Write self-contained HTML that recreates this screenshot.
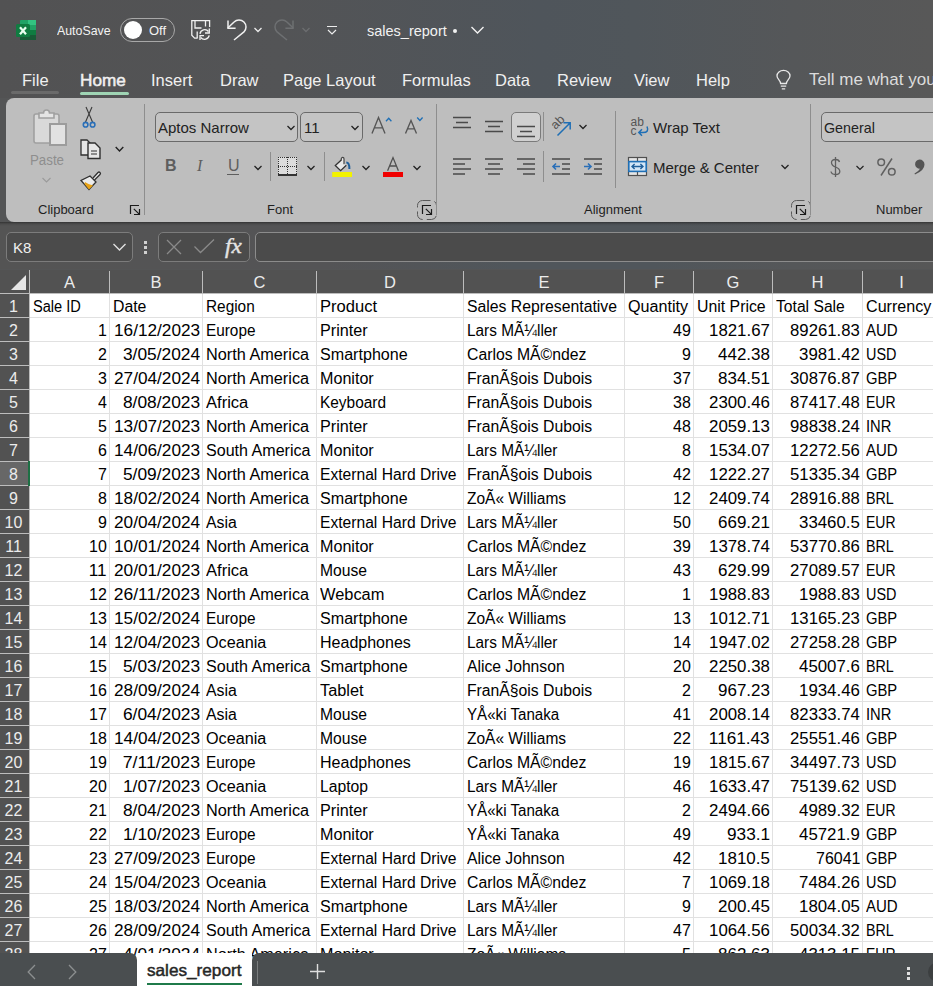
<!DOCTYPE html>
<html><head><meta charset="utf-8">
<style>
*{margin:0;padding:0;box-sizing:border-box}
html,body{width:933px;height:986px;overflow:hidden;background:#545556;font-family:"Liberation Sans",sans-serif}
.a{position:absolute}
svg{overflow:visible}
.t{position:absolute;white-space:nowrap;line-height:1}
.ch{height:23px;line-height:25px;text-align:center;color:#ececec;font-size:16.5px}
.rh{height:23px;line-height:25.5px;text-align:center;color:#ececec;font-size:16px}
.ct,.cn{height:23px;line-height:25px;color:#000;font-size:16px;white-space:nowrap;transform-origin:0 50%}
.cn{transform-origin:100% 50%}
.menu{font-size:16.5px;color:#f0f0f0;top:68px;height:24px;line-height:24px}
.rl{font-size:13px;color:#1e1e1e}

</style></head><body>
<div class="a" style="left:0;top:0;width:933px;height:98px;background:linear-gradient(90deg,#525253 0%,#535456 30%,#4f555b 58%,#50565b 68%,#555759 85%,#585858 100%)"></div>
<!-- excel icon -->
<svg class="a" style="left:16px;top:20px" width="21" height="20" viewBox="0 0 21 20">
<rect x="4" y="0" width="16" height="20" rx="1" fill="#21a366"/>
<rect x="12" y="0" width="8" height="5" fill="#33c481"/>
<rect x="12" y="10" width="8" height="5" fill="#107c41"/>
<rect x="4" y="15" width="16" height="5" fill="#185c37"/>
<rect x="0" y="4" width="14" height="13" rx="1.5" fill="#107c41"/>
<path d="M4 7.2 L10 14.3 M10 7.2 L4 14.3" stroke="#eafff0" stroke-width="2.2"/>
</svg>
<div class="t" style="left:57px;top:24px;font-size:13px;color:#f2f2f2;transform:scaleX(0.95);transform-origin:0 0">AutoSave</div>
<div class="a" style="left:120px;top:18px;width:55px;height:24px;border:1px solid #a8a8a8;border-radius:12px"></div>
<div class="a" style="left:124px;top:21px;width:18px;height:18px;border-radius:50%;background:#fff"></div>
<div class="t" style="left:149px;top:24px;font-size:13px;color:#f2f2f2">Off</div>
<!-- save icon -->
<svg class="a" style="left:188px;top:17px" width="26" height="26" viewBox="0 0 26 26" fill="none" stroke="#f0f0f0" stroke-width="1.3">
<path d="M9.5 21.2 H6.6 L3.8 18.3 V3.6 H21.6 V10"/>
<path d="M7 3.6 V11 H13.5 M17.5 3.6 V9.5"/>
<path d="M9.2 14.5 V21.2"/>
<path d="M12 16.8 A4.8 4.8 0 0 1 20.5 14.5"/>
<path d="M21.3 11.5 V16 H17"/>
<path d="M21.2 18.3 A4.8 4.8 0 0 1 12.7 20.5"/>
<path d="M12 23 V18.6 H16"/>
</svg>
<!-- undo -->
<svg class="a" style="left:226px;top:19px" width="22" height="23" viewBox="0 0 22 23" fill="none" stroke="#f0f0f0" stroke-width="1.5">
<path d="M2 1.6 V9.3 H9.6"/>
<path d="M1.8 9 L8.05 3.05 A7 7 0 0 1 17.95 12.95 L8 21"/>
</svg>
<svg class="a" style="left:254px;top:27px" width="8" height="6" viewBox="0 0 8 6" fill="none" stroke="#ececec" stroke-width="1.3"><path d="M0.5 1 L4 4.5 L7.5 1"/></svg>
<!-- redo dim -->
<svg class="a" style="left:273px;top:19px" width="22" height="23" viewBox="0 0 22 23" fill="none" stroke="#6e7072" stroke-width="1.5">
<path d="M20 1.6 V9.3 H12.4"/>
<path d="M20.2 9 L13.95 3.05 A7 7 0 0 0 4.05 12.95 L14 21"/>
</svg>
<svg class="a" style="left:302px;top:27px" width="8" height="6" viewBox="0 0 8 6" fill="none" stroke="#6c6e70" stroke-width="1.3"><path d="M0.5 1 L4 4.5 L7.5 1"/></svg>
<!-- customize -->
<svg class="a" style="left:326px;top:25px" width="12" height="12" viewBox="0 0 12 12" fill="none" stroke="#ececec" stroke-width="1.2"><path d="M1 1.5 H11 M2 5 L6 9 L10 5"/></svg>
<div class="t" style="left:367px;top:24px;font-size:14.5px;color:#f2f2f2">sales_report</div>
<div class="a" style="left:453px;top:29px;width:4px;height:4px;border-radius:50%;background:#f2f2f2"></div>
<svg class="a" style="left:471px;top:26px" width="13" height="8" viewBox="0 0 13 8" fill="none" stroke="#f2f2f2" stroke-width="1.4"><path d="M0.5 1 L6.5 7 L12.5 1"/></svg>
<!-- menu -->
<div class="t menu" style="left:22px">File</div>
<div class="a" style="left:11px;top:91px;width:48px;height:3px;border-radius:2px;background:#6a6a6a"></div>
<div class="t menu" style="left:80px;-webkit-text-stroke:0.5px #f0f0f0;transform:scaleX(1.04);transform-origin:0 0">Home</div>
<div class="a" style="left:80px;top:92px;width:49px;height:3px;border-radius:2px;background:#9fd4b4"></div>
<div class="t menu" style="left:151px">Insert</div>
<div class="t menu" style="left:220px">Draw</div>
<div class="t menu" style="left:283px">Page Layout</div>
<div class="t menu" style="left:402px">Formulas</div>
<div class="t menu" style="left:495px">Data</div>
<div class="t menu" style="left:557px">Review</div>
<div class="t menu" style="left:634px">View</div>
<div class="t menu" style="left:696px">Help</div>
<svg class="a" style="left:776px;top:70px" width="15" height="20" viewBox="0 0 15 20" fill="none" stroke="#e8e8e8" stroke-width="1.3">
<path d="M4.6 13.5 C4.6 10.2 1 9 1 6 A6.5 5.6 0 0 1 14 6 C14 9 10.4 10.2 10.4 13.5 Z"/>
<path d="M4.8 16.2 H10.2 M5.8 18.8 H9.2"/>
</svg>
<div class="t menu" style="left:809px;top:68px;font-size:17px;color:#dcdcdc">Tell me what you</div>

<div class="a" style="left:6px;top:98px;width:940px;height:124px;background:#bebebe;border-radius:8px"></div>
<!-- Clipboard group -->
<svg class="a" style="left:30px;top:106px" width="40" height="42" viewBox="0 0 40 42">
<rect x="4" y="8" width="25" height="29" rx="2" fill="#d9d9d9" stroke="#a0a0a0" stroke-width="1.6"/>
<path d="M9 12 V7 H13.5 A3 3 0 0 1 19.5 7 H24 V12 Z" fill="#e4e4e4" stroke="#a0a0a0" stroke-width="1.6"/>
<rect x="20" y="18" width="16" height="21" fill="#e2e2e2" stroke="#9c9c9c" stroke-width="2"/>
</svg>
<div class="t" style="left:30px;top:153px;font-size:14px;color:#8e8e8e;transform:scaleX(0.95);transform-origin:0 0">Paste</div>
<svg class="a" style="left:42px;top:177px" width="9" height="6" viewBox="0 0 9 6" fill="none" stroke="#9a9a9a" stroke-width="1.1"><path d="M0.5 1 L4.5 5 L8.5 1"/></svg>
<svg class="a" style="left:82px;top:106px" width="14" height="22" viewBox="0 0 14 22" fill="none">
<path d="M4 1 L10.5 16 M10 1 L3.5 16" stroke="#3a3a3a" stroke-width="1.1"/>
<circle cx="3.6" cy="18.7" r="2.3" stroke="#2a6fb8" stroke-width="1.6" fill="#c0c0c0"/>
<circle cx="10.6" cy="18.7" r="2.3" stroke="#2a6fb8" stroke-width="1.6" fill="#c0c0c0"/>
</svg>
<svg class="a" style="left:79px;top:138px" width="23" height="22" viewBox="0 0 23 22">
<path d="M2 2 H8 L11 5 V17 H2 Z" fill="#e6e6e6" stroke="#303030" stroke-width="1.3"/>
<path d="M9 5 H16 L21 10 V20.5 H9 Z" fill="#e6e6e6" stroke="#303030" stroke-width="1.4"/>
<path d="M12 13 H18 M12 16 H18" stroke="#303030" stroke-width="1.2"/>
</svg>
<svg class="a" style="left:115px;top:146px" width="9" height="7" viewBox="0 0 9 7" fill="none" stroke="#222" stroke-width="1.4"><path d="M0.7 1 L4.5 5 L8.3 1"/></svg>
<svg class="a" style="left:79px;top:170px" width="23" height="21" viewBox="0 0 23 21">
<path d="M14 8 L19 2.5 A1.3 1.3 0 0 1 21 4.5 L15.5 10" fill="#e8e8e8" stroke="#303030" stroke-width="1.3"/>
<path d="M11 6 L17 12 L10 19.5 L2 10.5 Z" fill="#ececec" stroke="#303030" stroke-width="1.3"/>
<path d="M5.5 14 L10 19.5 L14 15.5 Q9 14 6 12 Z" fill="#e8a317"/>
</svg>
<div class="t rl" style="left:38px;top:203px">Clipboard</div>
<svg class="a" style="left:129px;top:204px" width="12" height="12" viewBox="0 0 12 12" fill="none" stroke="#1a1a1a" stroke-width="1.2"><path d="M1.5 1.5 H10 M1.5 0.9 V10 M4.8 4.8 L10.2 10.2 M10.5 5 V10.5 H5"/></svg>
<div class="a" style="left:144px;top:104px;width:1px;height:111px;background:#8e8e8e"></div>
<!-- Font group -->
<div class="a" style="left:155px;top:112px;width:143px;height:30px;border:1px solid #6a6a6a;border-radius:5px;background:#c4c4c4"></div>
<div class="t" style="left:158px;top:120px;font-size:15px;color:#222">Aptos Narrow</div>
<svg class="a" style="left:287px;top:125px" width="8" height="6" viewBox="0 0 8 6" fill="none" stroke="#222" stroke-width="1.3"><path d="M0.5 1 L4 4.5 L7.5 1"/></svg>
<div class="a" style="left:300px;top:112px;width:63px;height:30px;border:1px solid #6a6a6a;border-radius:5px;background:#c4c4c4"></div>
<div class="t" style="left:304px;top:120px;font-size:15px;color:#222">11</div>
<svg class="a" style="left:351px;top:125px" width="8" height="6" viewBox="0 0 8 6" fill="none" stroke="#222" stroke-width="1.3"><path d="M0.5 1 L4 4.5 L7.5 1"/></svg>
<svg class="a" style="left:370px;top:116px" width="24" height="19" viewBox="0 0 24 19" fill="none" stroke="#555" stroke-width="1.35">
<path d="M2 17.6 L8.5 1.5 L15 17.6 M4.6 11.8 H12.4"/>
<path d="M16 5.2 L18.7 2.2 L21.4 5.2" stroke="#1f6fb5" stroke-width="1.3"/>
</svg>
<svg class="a" style="left:404px;top:116px" width="20" height="19" viewBox="0 0 20 19" fill="none" stroke="#555" stroke-width="1.35">
<path d="M1.5 17.6 L7 4.5 L12.5 17.6 M3.7 12.8 H10.3"/>
<path d="M13.2 1.5 L15.9 4.5 L18.6 1.5" stroke="#1f6fb5" stroke-width="1.3"/>
</svg>
<div class="t" style="left:165px;top:158px;font-size:16px;font-weight:bold;color:#5e5e5e">B</div>
<div class="t" style="left:197px;top:158px;font-size:16px;font-style:italic;color:#5e5e5e;font-family:'Liberation Serif'">I</div>
<div class="t" style="left:228px;top:158px;font-size:16px;color:#5e5e5e">U</div>
<div class="a" style="left:227px;top:174px;width:12px;height:1px;background:#5e5e5e"></div>
<svg class="a" style="left:254px;top:165px" width="8" height="6" viewBox="0 0 8 6" fill="none" stroke="#222" stroke-width="1.3"><path d="M0.5 1 L4 4.5 L7.5 1"/></svg>
<div class="a" style="left:270px;top:152px;width:1px;height:29px;background:#8e8e8e"></div>
<svg class="a" style="left:278px;top:157px" width="19" height="20" viewBox="0 0 19 20">
<rect x="0" y="0" width="19" height="18" fill="#dcdcdc"/>
<g fill="#333"><rect x="0" y="0" width="1" height="1"/><rect x="0" y="2" width="1" height="1"/><rect x="0" y="4" width="1" height="1"/><rect x="0" y="6" width="1" height="1"/><rect x="0" y="8" width="1" height="1"/><rect x="0" y="9" width="1" height="1"/><rect x="0" y="10" width="1" height="1"/><rect x="0" y="12" width="1" height="1"/><rect x="0" y="14" width="1" height="1"/><rect x="0" y="16" width="1" height="1"/><rect x="2" y="0" width="1" height="1"/><rect x="2" y="9" width="1" height="1"/><rect x="4" y="0" width="1" height="1"/><rect x="4" y="9" width="1" height="1"/><rect x="6" y="0" width="1" height="1"/><rect x="6" y="9" width="1" height="1"/><rect x="8" y="0" width="1" height="1"/><rect x="8" y="9" width="1" height="1"/><rect x="9" y="0" width="1" height="1"/><rect x="9" y="2" width="1" height="1"/><rect x="9" y="4" width="1" height="1"/><rect x="9" y="6" width="1" height="1"/><rect x="9" y="8" width="1" height="1"/><rect x="9" y="10" width="1" height="1"/><rect x="9" y="12" width="1" height="1"/><rect x="9" y="14" width="1" height="1"/><rect x="9" y="16" width="1" height="1"/><rect x="10" y="0" width="1" height="1"/><rect x="10" y="9" width="1" height="1"/><rect x="12" y="0" width="1" height="1"/><rect x="12" y="9" width="1" height="1"/><rect x="14" y="0" width="1" height="1"/><rect x="14" y="9" width="1" height="1"/><rect x="16" y="0" width="1" height="1"/><rect x="16" y="9" width="1" height="1"/><rect x="18" y="0" width="1" height="1"/><rect x="18" y="2" width="1" height="1"/><rect x="18" y="4" width="1" height="1"/><rect x="18" y="6" width="1" height="1"/><rect x="18" y="8" width="1" height="1"/><rect x="18" y="9" width="1" height="1"/><rect x="18" y="10" width="1" height="1"/><rect x="18" y="12" width="1" height="1"/><rect x="18" y="14" width="1" height="1"/><rect x="18" y="16" width="1" height="1"/></g>
<rect x="0" y="17" width="19" height="2" fill="#333"/>
</svg>
<svg class="a" style="left:307px;top:165px" width="8" height="6" viewBox="0 0 8 6" fill="none" stroke="#222" stroke-width="1.3"><path d="M0.5 1 L4 4.5 L7.5 1"/></svg>
<div class="a" style="left:324px;top:152px;width:1px;height:29px;background:#8e8e8e"></div>
<svg class="a" style="left:328px;top:152px" width="28" height="28" viewBox="0 0 28 28" fill="none">
<path d="M13.3 8 L7.3 13.5 L12.6 18.6 L18.3 13.2 L16 11 V6.8 A1.5 1.5 0 0 0 13.3 6.8 Z" fill="#e8e8e8"/>
<path d="M13.3 8 L7.3 13.5 L12.6 18.6 L18.3 13.2" stroke="#333" stroke-width="1.3"/>
<path d="M13.3 8.5 V6.8 A1.35 1.35 0 0 1 16 6.8 V12.3" stroke="#444" stroke-width="1.2"/>
<path d="M18.3 10.6 Q21.4 10.6 21.4 17" stroke="#1f5f9a" stroke-width="2"/>
<rect x="4.2" y="20" width="19.8" height="5" fill="#f2f200"/>
</svg>
<svg class="a" style="left:362px;top:165px" width="8" height="6" viewBox="0 0 8 6" fill="none" stroke="#222" stroke-width="1.3"><path d="M0.5 1 L4 4.5 L7.5 1"/></svg>
<svg class="a" style="left:387px;top:157px" width="12" height="14" viewBox="0 0 12 14" fill="none" stroke="#505050" stroke-width="1.3"><path d="M0.6 13.8 L6 0.6 L11.4 13.8 M2.6 9 H9.4"/></svg>
<div class="a" style="left:383px;top:172px;width:20px;height:5px;background:#f00000"></div>
<svg class="a" style="left:413px;top:165px" width="8" height="6" viewBox="0 0 8 6" fill="none" stroke="#222" stroke-width="1.3"><path d="M0.5 1 L4 4.5 L7.5 1"/></svg>
<div class="t rl" style="left:267px;top:203px">Font</div>
<svg class="a" style="left:417px;top:200px" width="20" height="20" viewBox="0 0 20 20" fill="none"><rect x="0.5" y="0.5" width="19" height="19" rx="5" stroke="#5a5a5a" stroke-width="1" stroke-dasharray="11 4" stroke-dashoffset="3"/></svg>
<svg class="a" style="left:421px;top:204px" width="12" height="12" viewBox="0 0 12 12" fill="none" stroke="#1a1a1a" stroke-width="1.2"><path d="M1.5 1.5 H10 M1.5 0.9 V10 M4.8 4.8 L10.2 10.2 M10.5 5 V10.5 H5"/></svg>
<div class="a" style="left:436px;top:104px;width:1px;height:111px;background:#8e8e8e"></div>
<!-- Alignment group -->
<svg class="a" style="left:452px;top:116px" width="20" height="13" viewBox="0 0 20 13" stroke="#4a4a4a" stroke-width="1.4"><path d="M1 1.5 H19 M4 6.5 H16 M1 11.5 H19"/></svg>
<svg class="a" style="left:484px;top:120px" width="20" height="13" viewBox="0 0 20 13" stroke="#4a4a4a" stroke-width="1.4"><path d="M1 1.5 H19 M4 6.5 H16 M1 11.5 H19"/></svg>
<div class="a" style="left:511px;top:112px;width:30px;height:30px;border:1px solid #7a7a7a;border-radius:5px;background:#d0d0d0"></div>
<svg class="a" style="left:516px;top:125px" width="20" height="13" viewBox="0 0 20 13" stroke="#4a4a4a" stroke-width="1.4"><path d="M1 1.5 H19 M4 6.5 H16 M1 11.5 H19"/></svg>
<div class="a" style="left:543px;top:112px;width:1px;height:29px;background:#8e8e8e"></div>
<svg class="a" style="left:550px;top:114px" width="24" height="23" viewBox="0 0 24 23" fill="none">
<text x="0" y="0" font-family="Liberation Sans" font-size="12.5" fill="#555" transform="translate(5.5 16) rotate(-45)">ab</text>
<path d="M7.5 21.5 L19.5 9.5 M13.5 8.8 H20.2 V15.5" stroke="#1f6fb5" stroke-width="1.5"/>
</svg>
<svg class="a" style="left:579px;top:124px" width="8" height="6" viewBox="0 0 8 6" fill="none" stroke="#222" stroke-width="1.3"><path d="M0.5 1 L4 4.5 L7.5 1"/></svg>
<svg class="a" style="left:452px;top:158px" width="20" height="18" viewBox="0 0 20 18" stroke="#4a4a4a" stroke-width="1.4"><path d="M1 1 H19 M1 6 H13 M1 11 H19 M1 16 H13"/></svg>
<svg class="a" style="left:484px;top:158px" width="20" height="18" viewBox="0 0 20 18" stroke="#4a4a4a" stroke-width="1.4"><path d="M1 1 H19 M4 6 H16 M1 11 H19 M4 16 H16"/></svg>
<svg class="a" style="left:516px;top:158px" width="20" height="18" viewBox="0 0 20 18" stroke="#4a4a4a" stroke-width="1.4"><path d="M1 1 H19 M7 6 H19 M1 11 H19 M7 16 H19"/></svg>
<div class="a" style="left:543px;top:151px;width:1px;height:31px;background:#8e8e8e"></div>
<svg class="a" style="left:551px;top:158px" width="20" height="18" viewBox="0 0 20 18" fill="none"><path d="M1 1 H19 M11 6 H19 M11 11 H19 M1 16 H19" stroke="#4a4a4a" stroke-width="1.6"/><path d="M9 8.5 H2 M5 5.5 L2 8.5 L5 11.5" stroke="#2a6fb8" stroke-width="1.6"/></svg>
<svg class="a" style="left:583px;top:158px" width="20" height="18" viewBox="0 0 20 18" fill="none"><path d="M1 1 H19 M11 6 H19 M11 11 H19 M1 16 H19" stroke="#4a4a4a" stroke-width="1.6"/><path d="M1 8.5 H8 M5 5.5 L8 8.5 L5 11.5" stroke="#2a6fb8" stroke-width="1.6"/></svg>
<div class="a" style="left:615px;top:111px;width:1px;height:77px;background:#8e8e8e"></div>
<svg class="a" style="left:630px;top:116px" width="20" height="22" viewBox="0 0 20 22" fill="none">
<text x="0.5" y="10" font-family="Liberation Sans" font-size="12" fill="#555">ab</text>
<text x="0.5" y="19" font-family="Liberation Sans" font-size="12" fill="#555">c</text>
<path d="M17 10.5 Q19.5 16.5 13 16.5 H9 M12 13.3 L8.8 16.5 L12 19.7" stroke="#1f6fb5" stroke-width="1.5"/>
</svg>
<div class="t" style="left:653px;top:120px;font-size:15px;color:#222">Wrap Text</div>
<svg class="a" style="left:628px;top:157px" width="19" height="19" viewBox="0 0 19 19" fill="none">
<rect x="0.5" y="0.5" width="18" height="18" fill="#e6e6e6" stroke="#505050" stroke-width="1.2"/>
<path d="M9.5 0.5 V4.5 M9.5 14.5 V18.5" stroke="#505050" stroke-width="1.2"/>
<rect x="0.8" y="4.6" width="17.4" height="9.8" fill="#d3e6f7" stroke="#1f6fb5" stroke-width="1.6"/>
<path d="M4 9.5 H15 M6.6 6.9 L4 9.5 L6.6 12.1 M12.4 6.9 L15 9.5 L12.4 12.1" stroke="#1f5f9a" stroke-width="1.4"/>
</svg>
<div class="t" style="left:653px;top:160px;font-size:15px;color:#222">Merge &amp; Center</div>
<svg class="a" style="left:781px;top:164px" width="8" height="6" viewBox="0 0 8 6" fill="none" stroke="#222" stroke-width="1.3"><path d="M0.5 1 L4 4.5 L7.5 1"/></svg>
<div class="t rl" style="left:584px;top:203px">Alignment</div>
<svg class="a" style="left:791px;top:200px" width="20" height="20" viewBox="0 0 20 20" fill="none"><rect x="0.5" y="0.5" width="19" height="19" rx="5" stroke="#5a5a5a" stroke-width="1" stroke-dasharray="11 4" stroke-dashoffset="3"/></svg>
<svg class="a" style="left:795px;top:204px" width="12" height="12" viewBox="0 0 12 12" fill="none" stroke="#1a1a1a" stroke-width="1.2"><path d="M1.5 1.5 H10 M1.5 0.9 V10 M4.8 4.8 L10.2 10.2 M10.5 5 V10.5 H5"/></svg>
<div class="a" style="left:810px;top:104px;width:1px;height:111px;background:#8e8e8e"></div>
<!-- Number group -->
<div class="a" style="left:821px;top:112px;width:140px;height:30px;border:1px solid #6a6a6a;border-radius:5px;background:#c4c4c4"></div>
<div class="t" style="left:824px;top:121px;font-size:14.3px;color:#222">General</div>
<svg class="a" style="left:830px;top:157px" width="11" height="21" viewBox="0 0 11 21" fill="none" stroke="#606060" stroke-width="1.3">
<path d="M9.5 5 Q9 2.5 5.5 2.5 Q1.5 2.5 1.5 5.5 Q1.5 8.5 5.5 10 Q9.8 11.5 9.8 14.5 Q9.8 17.5 5.5 17.5 Q1.5 17.5 1 14.5"/>
<path d="M5.5 0 V20"/>
</svg>
<svg class="a" style="left:856px;top:165px" width="8" height="6" viewBox="0 0 8 6" fill="none" stroke="#222" stroke-width="1.2"><path d="M0.5 1 L4 4.5 L7.5 1"/></svg>
<svg class="a" style="left:877px;top:158px" width="19" height="18" viewBox="0 0 19 18" fill="none" stroke="#606060" stroke-width="1.5">
<circle cx="4.2" cy="4.2" r="3.3"/><circle cx="14.8" cy="13.8" r="3.3"/><path d="M15 0.5 L4 17.5"/>
</svg>
<svg class="a" style="left:914px;top:159px" width="11" height="16" viewBox="0 0 11 16">
<path d="M5.5 0.5 A5 5 0 0 1 10.5 5.5 Q10.5 11.5 1 15.5 L0.5 14.5 Q5 12 6 9.8 A4.6 4.6 0 1 1 5.5 0.5 Z" fill="#545454"/>
</svg>
<div class="t rl" style="left:876px;top:203px">Number</div>

<div class="a" style="left:0;top:222px;width:933px;height:47px;background:linear-gradient(180deg,rgba(30,30,30,0.6) 0px,rgba(30,30,30,0.15) 2px,rgba(0,0,0,0) 4px),linear-gradient(90deg,#545454 0%,#545456 35%,#50565b 55%,#50565b 70%,#555759 85%,#575757 100%)"></div>
<div class="a" style="left:6px;top:232px;width:127px;height:30px;border:1px solid #7c7c7c;border-radius:5px;background:#4b4b4b"></div>
<div class="t" style="left:13px;top:240px;font-size:15px;color:#f0f0f0">K8</div>
<svg class="a" style="left:113px;top:243px" width="13" height="8" viewBox="0 0 13 8" fill="none" stroke="#e0e0e0" stroke-width="1.4"><path d="M0.5 1 L6.5 7 L12.5 1"/></svg>
<div class="a" style="left:144px;top:241px;width:3px;height:3px;background:#d0d0d0;"></div>
<div class="a" style="left:144px;top:246px;width:3px;height:3px;background:#d0d0d0;"></div>
<div class="a" style="left:144px;top:251px;width:3px;height:3px;background:#d0d0d0;"></div>
<div class="a" style="left:158px;top:232px;width:92px;height:30px;border:1px solid #7c7c7c;border-radius:5px;background:#4b4b4b"></div>
<svg class="a" style="left:166px;top:239px" width="16" height="16" viewBox="0 0 16 16" stroke="#8a8a8a" stroke-width="1.3"><path d="M1 1 L15 15 M15 1 L1 15"/></svg>
<svg class="a" style="left:194px;top:239px" width="21" height="16" viewBox="0 0 21 16" fill="none" stroke="#8a8a8a" stroke-width="1.3"><path d="M0.5 7.5 L6.5 13.5 L20 0.5"/></svg>
<div class="t" style="left:225px;top:236px;font-size:21px;font-family:'Liberation Serif';font-style:italic;color:#e4e4e4;-webkit-text-stroke:0.4px #e4e4e4;transform:scaleX(1.1);transform-origin:0 0">fx</div>
<div class="a" style="left:255px;top:232px;width:700px;height:30px;border:1px solid #8c8c8c;border-radius:5px;background:#4b4b4b"></div>

<div class="a" style="left:0;top:270px;width:933px;height:23px;background:#525252"></div>
<svg class="a" style="left:0;top:270px" width="29" height="24"><path d="M26 5 L26 20 L11 20 Z" fill="#e6e6e6"/></svg>
<div class="a ch" style="left:30px;top:270px;width:79px">A</div>
<div class="a" style="left:29px;top:271px;width:1px;height:22px;background:#bcbcbc"></div>
<div class="a ch" style="left:110px;top:270px;width:92px">B</div>
<div class="a" style="left:109px;top:271px;width:1px;height:22px;background:#bcbcbc"></div>
<div class="a ch" style="left:203px;top:270px;width:113px">C</div>
<div class="a" style="left:202px;top:271px;width:1px;height:22px;background:#bcbcbc"></div>
<div class="a ch" style="left:317px;top:270px;width:146px">D</div>
<div class="a" style="left:316px;top:271px;width:1px;height:22px;background:#bcbcbc"></div>
<div class="a ch" style="left:464px;top:270px;width:160px">E</div>
<div class="a" style="left:463px;top:271px;width:1px;height:22px;background:#bcbcbc"></div>
<div class="a ch" style="left:625px;top:270px;width:68px">F</div>
<div class="a" style="left:624px;top:271px;width:1px;height:22px;background:#bcbcbc"></div>
<div class="a ch" style="left:694px;top:270px;width:78px">G</div>
<div class="a" style="left:693px;top:271px;width:1px;height:22px;background:#bcbcbc"></div>
<div class="a ch" style="left:773px;top:270px;width:89px">H</div>
<div class="a" style="left:772px;top:271px;width:1px;height:22px;background:#bcbcbc"></div>
<div class="a ch" style="left:863px;top:270px;width:77px">I</div>
<div class="a" style="left:862px;top:271px;width:1px;height:22px;background:#bcbcbc"></div>
<div class="a" style="left:0;top:293px;width:933px;height:1px;background:#bdbdbd"></div>
<div class="a" style="left:30px;top:294px;width:903px;height:700px;background:#fff"></div>
<div class="a" style="left:0;top:294px;width:29px;height:700px;background:#525252"></div>
<div class="a" style="left:29px;top:270px;width:1px;height:720px;background:#bdbdbd"></div>
<div class="a" style="left:0;top:317px;width:29px;height:1px;background:#bdbdbd"></div>
<div class="a" style="left:30px;top:317px;width:903px;height:1px;background:#e1e1e1"></div>
<div class="a rh" style="left:0;top:294px;width:27px">1</div>
<div class="a" style="left:0;top:341px;width:29px;height:1px;background:#bdbdbd"></div>
<div class="a" style="left:30px;top:341px;width:903px;height:1px;background:#e1e1e1"></div>
<div class="a rh" style="left:0;top:318px;width:27px">2</div>
<div class="a" style="left:0;top:365px;width:29px;height:1px;background:#bdbdbd"></div>
<div class="a" style="left:30px;top:365px;width:903px;height:1px;background:#e1e1e1"></div>
<div class="a rh" style="left:0;top:342px;width:27px">3</div>
<div class="a" style="left:0;top:389px;width:29px;height:1px;background:#bdbdbd"></div>
<div class="a" style="left:30px;top:389px;width:903px;height:1px;background:#e1e1e1"></div>
<div class="a rh" style="left:0;top:366px;width:27px">4</div>
<div class="a" style="left:0;top:413px;width:29px;height:1px;background:#bdbdbd"></div>
<div class="a" style="left:30px;top:413px;width:903px;height:1px;background:#e1e1e1"></div>
<div class="a rh" style="left:0;top:390px;width:27px">5</div>
<div class="a" style="left:0;top:437px;width:29px;height:1px;background:#bdbdbd"></div>
<div class="a" style="left:30px;top:437px;width:903px;height:1px;background:#e1e1e1"></div>
<div class="a rh" style="left:0;top:414px;width:27px">6</div>
<div class="a" style="left:0;top:461px;width:29px;height:1px;background:#bdbdbd"></div>
<div class="a" style="left:30px;top:461px;width:903px;height:1px;background:#e1e1e1"></div>
<div class="a rh" style="left:0;top:438px;width:27px">7</div>
<div class="a" style="left:0;top:485px;width:29px;height:1px;background:#bdbdbd"></div>
<div class="a" style="left:30px;top:485px;width:903px;height:1px;background:#e1e1e1"></div>
<div class="a" style="left:0;top:462px;width:29px;height:23px;background:#676767"></div>
<div class="a" style="left:28px;top:461px;width:2px;height:25px;background:#1d7044"></div>
<div class="a rh" style="left:0;top:462px;width:27px">8</div>
<div class="a" style="left:0;top:509px;width:29px;height:1px;background:#bdbdbd"></div>
<div class="a" style="left:30px;top:509px;width:903px;height:1px;background:#e1e1e1"></div>
<div class="a rh" style="left:0;top:486px;width:27px">9</div>
<div class="a" style="left:0;top:533px;width:29px;height:1px;background:#bdbdbd"></div>
<div class="a" style="left:30px;top:533px;width:903px;height:1px;background:#e1e1e1"></div>
<div class="a rh" style="left:0;top:510px;width:27px">10</div>
<div class="a" style="left:0;top:557px;width:29px;height:1px;background:#bdbdbd"></div>
<div class="a" style="left:30px;top:557px;width:903px;height:1px;background:#e1e1e1"></div>
<div class="a rh" style="left:0;top:534px;width:27px">11</div>
<div class="a" style="left:0;top:581px;width:29px;height:1px;background:#bdbdbd"></div>
<div class="a" style="left:30px;top:581px;width:903px;height:1px;background:#e1e1e1"></div>
<div class="a rh" style="left:0;top:558px;width:27px">12</div>
<div class="a" style="left:0;top:605px;width:29px;height:1px;background:#bdbdbd"></div>
<div class="a" style="left:30px;top:605px;width:903px;height:1px;background:#e1e1e1"></div>
<div class="a rh" style="left:0;top:582px;width:27px">13</div>
<div class="a" style="left:0;top:629px;width:29px;height:1px;background:#bdbdbd"></div>
<div class="a" style="left:30px;top:629px;width:903px;height:1px;background:#e1e1e1"></div>
<div class="a rh" style="left:0;top:606px;width:27px">14</div>
<div class="a" style="left:0;top:653px;width:29px;height:1px;background:#bdbdbd"></div>
<div class="a" style="left:30px;top:653px;width:903px;height:1px;background:#e1e1e1"></div>
<div class="a rh" style="left:0;top:630px;width:27px">15</div>
<div class="a" style="left:0;top:677px;width:29px;height:1px;background:#bdbdbd"></div>
<div class="a" style="left:30px;top:677px;width:903px;height:1px;background:#e1e1e1"></div>
<div class="a rh" style="left:0;top:654px;width:27px">16</div>
<div class="a" style="left:0;top:701px;width:29px;height:1px;background:#bdbdbd"></div>
<div class="a" style="left:30px;top:701px;width:903px;height:1px;background:#e1e1e1"></div>
<div class="a rh" style="left:0;top:678px;width:27px">17</div>
<div class="a" style="left:0;top:725px;width:29px;height:1px;background:#bdbdbd"></div>
<div class="a" style="left:30px;top:725px;width:903px;height:1px;background:#e1e1e1"></div>
<div class="a rh" style="left:0;top:702px;width:27px">18</div>
<div class="a" style="left:0;top:749px;width:29px;height:1px;background:#bdbdbd"></div>
<div class="a" style="left:30px;top:749px;width:903px;height:1px;background:#e1e1e1"></div>
<div class="a rh" style="left:0;top:726px;width:27px">19</div>
<div class="a" style="left:0;top:773px;width:29px;height:1px;background:#bdbdbd"></div>
<div class="a" style="left:30px;top:773px;width:903px;height:1px;background:#e1e1e1"></div>
<div class="a rh" style="left:0;top:750px;width:27px">20</div>
<div class="a" style="left:0;top:797px;width:29px;height:1px;background:#bdbdbd"></div>
<div class="a" style="left:30px;top:797px;width:903px;height:1px;background:#e1e1e1"></div>
<div class="a rh" style="left:0;top:774px;width:27px">21</div>
<div class="a" style="left:0;top:821px;width:29px;height:1px;background:#bdbdbd"></div>
<div class="a" style="left:30px;top:821px;width:903px;height:1px;background:#e1e1e1"></div>
<div class="a rh" style="left:0;top:798px;width:27px">22</div>
<div class="a" style="left:0;top:845px;width:29px;height:1px;background:#bdbdbd"></div>
<div class="a" style="left:30px;top:845px;width:903px;height:1px;background:#e1e1e1"></div>
<div class="a rh" style="left:0;top:822px;width:27px">23</div>
<div class="a" style="left:0;top:869px;width:29px;height:1px;background:#bdbdbd"></div>
<div class="a" style="left:30px;top:869px;width:903px;height:1px;background:#e1e1e1"></div>
<div class="a rh" style="left:0;top:846px;width:27px">24</div>
<div class="a" style="left:0;top:893px;width:29px;height:1px;background:#bdbdbd"></div>
<div class="a" style="left:30px;top:893px;width:903px;height:1px;background:#e1e1e1"></div>
<div class="a rh" style="left:0;top:870px;width:27px">25</div>
<div class="a" style="left:0;top:917px;width:29px;height:1px;background:#bdbdbd"></div>
<div class="a" style="left:30px;top:917px;width:903px;height:1px;background:#e1e1e1"></div>
<div class="a rh" style="left:0;top:894px;width:27px">26</div>
<div class="a" style="left:0;top:941px;width:29px;height:1px;background:#bdbdbd"></div>
<div class="a" style="left:30px;top:941px;width:903px;height:1px;background:#e1e1e1"></div>
<div class="a rh" style="left:0;top:918px;width:27px">27</div>
<div class="a" style="left:0;top:965px;width:29px;height:1px;background:#bdbdbd"></div>
<div class="a" style="left:30px;top:965px;width:903px;height:1px;background:#e1e1e1"></div>
<div class="a rh" style="left:0;top:942px;width:27px">28</div>
<div class="a" style="left:109px;top:294px;width:1px;height:700px;background:#e1e1e1"></div>
<div class="a" style="left:202px;top:294px;width:1px;height:700px;background:#e1e1e1"></div>
<div class="a" style="left:316px;top:294px;width:1px;height:700px;background:#e1e1e1"></div>
<div class="a" style="left:463px;top:294px;width:1px;height:700px;background:#e1e1e1"></div>
<div class="a" style="left:624px;top:294px;width:1px;height:700px;background:#e1e1e1"></div>
<div class="a" style="left:693px;top:294px;width:1px;height:700px;background:#e1e1e1"></div>
<div class="a" style="left:772px;top:294px;width:1px;height:700px;background:#e1e1e1"></div>
<div class="a" style="left:862px;top:294px;width:1px;height:700px;background:#e1e1e1"></div>
<div class="a ct" style="left:33px;top:294px;transform:scaleX(0.913)">Sale ID</div>
<div class="a ct" style="left:113px;top:294px;transform:scaleX(0.988)">Date</div>
<div class="a ct" style="left:206px;top:294px;transform:scaleX(0.961)">Region</div>
<div class="a ct" style="left:320px;top:294px;transform:scaleX(1.034)">Product</div>
<div class="a ct" style="left:467px;top:294px;transform:scaleX(0.986)">Sales Representative</div>
<div class="a ct" style="left:628px;top:294px;transform:scaleX(1.008)">Quantity</div>
<div class="a ct" style="left:697px;top:294px;transform:scaleX(0.990)">Unit Price</div>
<div class="a ct" style="left:776px;top:294px;transform:scaleX(0.979)">Total Sale</div>
<div class="a ct" style="left:866px;top:294px;transform:scaleX(1.008)">Currency</div>
<div class="a cn" style="right:826px;top:318px;transform:scaleX(0.998)">1</div>
<div class="a cn" style="right:733px;top:318px;transform:scaleX(1.075)">16/12/2023</div>
<div class="a ct" style="left:206px;top:318px;transform:scaleX(0.958)">Europe</div>
<div class="a ct" style="left:320px;top:318px;transform:scaleX(1.012)">Printer</div>
<div class="a ct" style="left:467px;top:318px;transform:scaleX(0.960)">Lars MÃ¼ller</div>
<div class="a cn" style="right:242px;top:318px;transform:scaleX(0.998)">49</div>
<div class="a cn" style="right:163px;top:318px;transform:scaleX(1.051)">1821.67</div>
<div class="a cn" style="right:73px;top:318px;transform:scaleX(1.044)">89261.83</div>
<div class="a ct" style="left:866px;top:318px;transform:scaleX(0.938)">AUD</div>
<div class="a cn" style="right:826px;top:342px;transform:scaleX(0.998)">2</div>
<div class="a cn" style="right:733px;top:342px;transform:scaleX(1.085)">3/05/2024</div>
<div class="a ct" style="left:206px;top:342px;transform:scaleX(1.017)">North America</div>
<div class="a ct" style="left:320px;top:342px;transform:scaleX(1.006)">Smartphone</div>
<div class="a ct" style="left:467px;top:342px;transform:scaleX(0.985)">Carlos MÃ©ndez</div>
<div class="a cn" style="right:242px;top:342px;transform:scaleX(0.998)">9</div>
<div class="a cn" style="right:163px;top:342px;transform:scaleX(1.061)">442.38</div>
<div class="a cn" style="right:73px;top:342px;transform:scaleX(1.051)">3981.42</div>
<div class="a ct" style="left:866px;top:342px;transform:scaleX(0.900)">USD</div>
<div class="a cn" style="right:826px;top:366px;transform:scaleX(0.998)">3</div>
<div class="a cn" style="right:733px;top:366px;transform:scaleX(1.075)">27/04/2024</div>
<div class="a ct" style="left:206px;top:366px;transform:scaleX(1.017)">North America</div>
<div class="a ct" style="left:320px;top:366px;transform:scaleX(1.007)">Monitor</div>
<div class="a ct" style="left:467px;top:366px;transform:scaleX(0.983)">FranÃ§ois Dubois</div>
<div class="a cn" style="right:242px;top:366px;transform:scaleX(0.998)">37</div>
<div class="a cn" style="right:163px;top:366px;transform:scaleX(1.061)">834.51</div>
<div class="a cn" style="right:73px;top:366px;transform:scaleX(1.044)">30876.87</div>
<div class="a ct" style="left:866px;top:366px;transform:scaleX(0.924)">GBP</div>
<div class="a cn" style="right:826px;top:390px;transform:scaleX(0.998)">4</div>
<div class="a cn" style="right:733px;top:390px;transform:scaleX(1.085)">8/08/2023</div>
<div class="a ct" style="left:206px;top:390px;transform:scaleX(1.034)">Africa</div>
<div class="a ct" style="left:320px;top:390px;transform:scaleX(0.964)">Keyboard</div>
<div class="a ct" style="left:467px;top:390px;transform:scaleX(0.983)">FranÃ§ois Dubois</div>
<div class="a cn" style="right:242px;top:390px;transform:scaleX(0.998)">38</div>
<div class="a cn" style="right:163px;top:390px;transform:scaleX(1.051)">2300.46</div>
<div class="a cn" style="right:73px;top:390px;transform:scaleX(1.044)">87417.48</div>
<div class="a ct" style="left:866px;top:390px;transform:scaleX(0.874)">EUR</div>
<div class="a cn" style="right:826px;top:414px;transform:scaleX(0.998)">5</div>
<div class="a cn" style="right:733px;top:414px;transform:scaleX(1.075)">13/07/2023</div>
<div class="a ct" style="left:206px;top:414px;transform:scaleX(1.017)">North America</div>
<div class="a ct" style="left:320px;top:414px;transform:scaleX(1.012)">Printer</div>
<div class="a ct" style="left:467px;top:414px;transform:scaleX(0.983)">FranÃ§ois Dubois</div>
<div class="a cn" style="right:242px;top:414px;transform:scaleX(0.998)">48</div>
<div class="a cn" style="right:163px;top:414px;transform:scaleX(1.051)">2059.13</div>
<div class="a cn" style="right:73px;top:414px;transform:scaleX(1.044)">98838.24</div>
<div class="a ct" style="left:866px;top:414px;transform:scaleX(0.921)">INR</div>
<div class="a cn" style="right:826px;top:438px;transform:scaleX(0.998)">6</div>
<div class="a cn" style="right:733px;top:438px;transform:scaleX(1.075)">14/06/2023</div>
<div class="a ct" style="left:206px;top:438px;transform:scaleX(1.004)">South America</div>
<div class="a ct" style="left:320px;top:438px;transform:scaleX(1.007)">Monitor</div>
<div class="a ct" style="left:467px;top:438px;transform:scaleX(0.960)">Lars MÃ¼ller</div>
<div class="a cn" style="right:242px;top:438px;transform:scaleX(0.998)">8</div>
<div class="a cn" style="right:163px;top:438px;transform:scaleX(1.051)">1534.07</div>
<div class="a cn" style="right:73px;top:438px;transform:scaleX(1.044)">12272.56</div>
<div class="a ct" style="left:866px;top:438px;transform:scaleX(0.938)">AUD</div>
<div class="a cn" style="right:826px;top:462px;transform:scaleX(0.998)">7</div>
<div class="a cn" style="right:733px;top:462px;transform:scaleX(1.085)">5/09/2023</div>
<div class="a ct" style="left:206px;top:462px;transform:scaleX(1.017)">North America</div>
<div class="a ct" style="left:320px;top:462px;transform:scaleX(0.977)">External Hard Drive</div>
<div class="a ct" style="left:467px;top:462px;transform:scaleX(0.983)">FranÃ§ois Dubois</div>
<div class="a cn" style="right:242px;top:462px;transform:scaleX(0.998)">42</div>
<div class="a cn" style="right:163px;top:462px;transform:scaleX(1.051)">1222.27</div>
<div class="a cn" style="right:73px;top:462px;transform:scaleX(1.044)">51335.34</div>
<div class="a ct" style="left:866px;top:462px;transform:scaleX(0.924)">GBP</div>
<div class="a cn" style="right:826px;top:486px;transform:scaleX(0.998)">8</div>
<div class="a cn" style="right:733px;top:486px;transform:scaleX(1.075)">18/02/2024</div>
<div class="a ct" style="left:206px;top:486px;transform:scaleX(1.017)">North America</div>
<div class="a ct" style="left:320px;top:486px;transform:scaleX(1.006)">Smartphone</div>
<div class="a ct" style="left:467px;top:486px;transform:scaleX(0.969)">ZoÃ« Williams</div>
<div class="a cn" style="right:242px;top:486px;transform:scaleX(0.998)">12</div>
<div class="a cn" style="right:163px;top:486px;transform:scaleX(1.051)">2409.74</div>
<div class="a cn" style="right:73px;top:486px;transform:scaleX(1.044)">28916.88</div>
<div class="a ct" style="left:866px;top:486px;transform:scaleX(0.894)">BRL</div>
<div class="a cn" style="right:826px;top:510px;transform:scaleX(0.998)">9</div>
<div class="a cn" style="right:733px;top:510px;transform:scaleX(1.075)">20/04/2024</div>
<div class="a ct" style="left:206px;top:510px;transform:scaleX(0.990)">Asia</div>
<div class="a ct" style="left:320px;top:510px;transform:scaleX(0.977)">External Hard Drive</div>
<div class="a ct" style="left:467px;top:510px;transform:scaleX(0.960)">Lars MÃ¼ller</div>
<div class="a cn" style="right:242px;top:510px;transform:scaleX(0.998)">50</div>
<div class="a cn" style="right:163px;top:510px;transform:scaleX(1.061)">669.21</div>
<div class="a cn" style="right:73px;top:510px;transform:scaleX(1.051)">33460.5</div>
<div class="a ct" style="left:866px;top:510px;transform:scaleX(0.874)">EUR</div>
<div class="a cn" style="right:826px;top:534px;transform:scaleX(0.998)">10</div>
<div class="a cn" style="right:733px;top:534px;transform:scaleX(1.075)">10/01/2024</div>
<div class="a ct" style="left:206px;top:534px;transform:scaleX(1.017)">North America</div>
<div class="a ct" style="left:320px;top:534px;transform:scaleX(1.007)">Monitor</div>
<div class="a ct" style="left:467px;top:534px;transform:scaleX(0.985)">Carlos MÃ©ndez</div>
<div class="a cn" style="right:242px;top:534px;transform:scaleX(0.998)">39</div>
<div class="a cn" style="right:163px;top:534px;transform:scaleX(1.051)">1378.74</div>
<div class="a cn" style="right:73px;top:534px;transform:scaleX(1.044)">53770.86</div>
<div class="a ct" style="left:866px;top:534px;transform:scaleX(0.894)">BRL</div>
<div class="a cn" style="right:826px;top:558px;transform:scaleX(1.070)">11</div>
<div class="a cn" style="right:733px;top:558px;transform:scaleX(1.075)">20/01/2023</div>
<div class="a ct" style="left:206px;top:558px;transform:scaleX(1.034)">Africa</div>
<div class="a ct" style="left:320px;top:558px;transform:scaleX(0.979)">Mouse</div>
<div class="a ct" style="left:467px;top:558px;transform:scaleX(0.960)">Lars MÃ¼ller</div>
<div class="a cn" style="right:242px;top:558px;transform:scaleX(0.998)">43</div>
<div class="a cn" style="right:163px;top:558px;transform:scaleX(1.061)">629.99</div>
<div class="a cn" style="right:73px;top:558px;transform:scaleX(1.044)">27089.57</div>
<div class="a ct" style="left:866px;top:558px;transform:scaleX(0.874)">EUR</div>
<div class="a cn" style="right:826px;top:582px;transform:scaleX(0.998)">12</div>
<div class="a cn" style="right:733px;top:582px;transform:scaleX(1.091)">26/11/2023</div>
<div class="a ct" style="left:206px;top:582px;transform:scaleX(1.017)">North America</div>
<div class="a ct" style="left:320px;top:582px;transform:scaleX(1.025)">Webcam</div>
<div class="a ct" style="left:467px;top:582px;transform:scaleX(0.985)">Carlos MÃ©ndez</div>
<div class="a cn" style="right:242px;top:582px;transform:scaleX(0.998)">1</div>
<div class="a cn" style="right:163px;top:582px;transform:scaleX(1.051)">1988.83</div>
<div class="a cn" style="right:73px;top:582px;transform:scaleX(1.051)">1988.83</div>
<div class="a ct" style="left:866px;top:582px;transform:scaleX(0.900)">USD</div>
<div class="a cn" style="right:826px;top:606px;transform:scaleX(0.998)">13</div>
<div class="a cn" style="right:733px;top:606px;transform:scaleX(1.075)">15/02/2024</div>
<div class="a ct" style="left:206px;top:606px;transform:scaleX(0.958)">Europe</div>
<div class="a ct" style="left:320px;top:606px;transform:scaleX(1.006)">Smartphone</div>
<div class="a ct" style="left:467px;top:606px;transform:scaleX(0.969)">ZoÃ« Williams</div>
<div class="a cn" style="right:242px;top:606px;transform:scaleX(0.998)">13</div>
<div class="a cn" style="right:163px;top:606px;transform:scaleX(1.051)">1012.71</div>
<div class="a cn" style="right:73px;top:606px;transform:scaleX(1.044)">13165.23</div>
<div class="a ct" style="left:866px;top:606px;transform:scaleX(0.924)">GBP</div>
<div class="a cn" style="right:826px;top:630px;transform:scaleX(0.998)">14</div>
<div class="a cn" style="right:733px;top:630px;transform:scaleX(1.075)">12/04/2023</div>
<div class="a ct" style="left:206px;top:630px;transform:scaleX(1.012)">Oceania</div>
<div class="a ct" style="left:320px;top:630px;transform:scaleX(1.001)">Headphones</div>
<div class="a ct" style="left:467px;top:630px;transform:scaleX(0.960)">Lars MÃ¼ller</div>
<div class="a cn" style="right:242px;top:630px;transform:scaleX(0.998)">14</div>
<div class="a cn" style="right:163px;top:630px;transform:scaleX(1.051)">1947.02</div>
<div class="a cn" style="right:73px;top:630px;transform:scaleX(1.044)">27258.28</div>
<div class="a ct" style="left:866px;top:630px;transform:scaleX(0.924)">GBP</div>
<div class="a cn" style="right:826px;top:654px;transform:scaleX(0.998)">15</div>
<div class="a cn" style="right:733px;top:654px;transform:scaleX(1.085)">5/03/2023</div>
<div class="a ct" style="left:206px;top:654px;transform:scaleX(1.004)">South America</div>
<div class="a ct" style="left:320px;top:654px;transform:scaleX(1.006)">Smartphone</div>
<div class="a ct" style="left:467px;top:654px;transform:scaleX(0.980)">Alice Johnson</div>
<div class="a cn" style="right:242px;top:654px;transform:scaleX(0.998)">20</div>
<div class="a cn" style="right:163px;top:654px;transform:scaleX(1.051)">2250.38</div>
<div class="a cn" style="right:73px;top:654px;transform:scaleX(1.051)">45007.6</div>
<div class="a ct" style="left:866px;top:654px;transform:scaleX(0.894)">BRL</div>
<div class="a cn" style="right:826px;top:678px;transform:scaleX(0.998)">16</div>
<div class="a cn" style="right:733px;top:678px;transform:scaleX(1.075)">28/09/2024</div>
<div class="a ct" style="left:206px;top:678px;transform:scaleX(0.990)">Asia</div>
<div class="a ct" style="left:320px;top:678px;transform:scaleX(1.021)">Tablet</div>
<div class="a ct" style="left:467px;top:678px;transform:scaleX(0.983)">FranÃ§ois Dubois</div>
<div class="a cn" style="right:242px;top:678px;transform:scaleX(0.998)">2</div>
<div class="a cn" style="right:163px;top:678px;transform:scaleX(1.061)">967.23</div>
<div class="a cn" style="right:73px;top:678px;transform:scaleX(1.051)">1934.46</div>
<div class="a ct" style="left:866px;top:678px;transform:scaleX(0.924)">GBP</div>
<div class="a cn" style="right:826px;top:702px;transform:scaleX(0.998)">17</div>
<div class="a cn" style="right:733px;top:702px;transform:scaleX(1.085)">6/04/2023</div>
<div class="a ct" style="left:206px;top:702px;transform:scaleX(0.990)">Asia</div>
<div class="a ct" style="left:320px;top:702px;transform:scaleX(0.979)">Mouse</div>
<div class="a ct" style="left:467px;top:702px;transform:scaleX(0.945)">YÅ«ki Tanaka</div>
<div class="a cn" style="right:242px;top:702px;transform:scaleX(0.998)">41</div>
<div class="a cn" style="right:163px;top:702px;transform:scaleX(1.051)">2008.14</div>
<div class="a cn" style="right:73px;top:702px;transform:scaleX(1.044)">82333.74</div>
<div class="a ct" style="left:866px;top:702px;transform:scaleX(0.921)">INR</div>
<div class="a cn" style="right:826px;top:726px;transform:scaleX(0.998)">18</div>
<div class="a cn" style="right:733px;top:726px;transform:scaleX(1.075)">14/04/2023</div>
<div class="a ct" style="left:206px;top:726px;transform:scaleX(1.012)">Oceania</div>
<div class="a ct" style="left:320px;top:726px;transform:scaleX(0.979)">Mouse</div>
<div class="a ct" style="left:467px;top:726px;transform:scaleX(0.969)">ZoÃ« Williams</div>
<div class="a cn" style="right:242px;top:726px;transform:scaleX(0.998)">22</div>
<div class="a cn" style="right:163px;top:726px;transform:scaleX(1.073)">1161.43</div>
<div class="a cn" style="right:73px;top:726px;transform:scaleX(1.044)">25551.46</div>
<div class="a ct" style="left:866px;top:726px;transform:scaleX(0.924)">GBP</div>
<div class="a cn" style="right:826px;top:750px;transform:scaleX(0.998)">19</div>
<div class="a cn" style="right:733px;top:750px;transform:scaleX(1.103)">7/11/2023</div>
<div class="a ct" style="left:206px;top:750px;transform:scaleX(0.958)">Europe</div>
<div class="a ct" style="left:320px;top:750px;transform:scaleX(1.001)">Headphones</div>
<div class="a ct" style="left:467px;top:750px;transform:scaleX(0.985)">Carlos MÃ©ndez</div>
<div class="a cn" style="right:242px;top:750px;transform:scaleX(0.998)">19</div>
<div class="a cn" style="right:163px;top:750px;transform:scaleX(1.051)">1815.67</div>
<div class="a cn" style="right:73px;top:750px;transform:scaleX(1.044)">34497.73</div>
<div class="a ct" style="left:866px;top:750px;transform:scaleX(0.900)">USD</div>
<div class="a cn" style="right:826px;top:774px;transform:scaleX(0.998)">20</div>
<div class="a cn" style="right:733px;top:774px;transform:scaleX(1.085)">1/07/2023</div>
<div class="a ct" style="left:206px;top:774px;transform:scaleX(1.012)">Oceania</div>
<div class="a ct" style="left:320px;top:774px;transform:scaleX(0.982)">Laptop</div>
<div class="a ct" style="left:467px;top:774px;transform:scaleX(0.960)">Lars MÃ¼ller</div>
<div class="a cn" style="right:242px;top:774px;transform:scaleX(0.998)">46</div>
<div class="a cn" style="right:163px;top:774px;transform:scaleX(1.051)">1633.47</div>
<div class="a cn" style="right:73px;top:774px;transform:scaleX(1.044)">75139.62</div>
<div class="a ct" style="left:866px;top:774px;transform:scaleX(0.900)">USD</div>
<div class="a cn" style="right:826px;top:798px;transform:scaleX(0.998)">21</div>
<div class="a cn" style="right:733px;top:798px;transform:scaleX(1.085)">8/04/2023</div>
<div class="a ct" style="left:206px;top:798px;transform:scaleX(1.017)">North America</div>
<div class="a ct" style="left:320px;top:798px;transform:scaleX(1.012)">Printer</div>
<div class="a ct" style="left:467px;top:798px;transform:scaleX(0.945)">YÅ«ki Tanaka</div>
<div class="a cn" style="right:242px;top:798px;transform:scaleX(0.998)">2</div>
<div class="a cn" style="right:163px;top:798px;transform:scaleX(1.051)">2494.66</div>
<div class="a cn" style="right:73px;top:798px;transform:scaleX(1.051)">4989.32</div>
<div class="a ct" style="left:866px;top:798px;transform:scaleX(0.874)">EUR</div>
<div class="a cn" style="right:826px;top:822px;transform:scaleX(0.998)">22</div>
<div class="a cn" style="right:733px;top:822px;transform:scaleX(1.085)">1/10/2023</div>
<div class="a ct" style="left:206px;top:822px;transform:scaleX(0.958)">Europe</div>
<div class="a ct" style="left:320px;top:822px;transform:scaleX(1.007)">Monitor</div>
<div class="a ct" style="left:467px;top:822px;transform:scaleX(0.945)">YÅ«ki Tanaka</div>
<div class="a cn" style="right:242px;top:822px;transform:scaleX(0.998)">49</div>
<div class="a cn" style="right:163px;top:822px;transform:scaleX(1.075)">933.1</div>
<div class="a cn" style="right:73px;top:822px;transform:scaleX(1.051)">45721.9</div>
<div class="a ct" style="left:866px;top:822px;transform:scaleX(0.924)">GBP</div>
<div class="a cn" style="right:826px;top:846px;transform:scaleX(0.998)">23</div>
<div class="a cn" style="right:733px;top:846px;transform:scaleX(1.075)">27/09/2023</div>
<div class="a ct" style="left:206px;top:846px;transform:scaleX(0.958)">Europe</div>
<div class="a ct" style="left:320px;top:846px;transform:scaleX(0.977)">External Hard Drive</div>
<div class="a ct" style="left:467px;top:846px;transform:scaleX(0.980)">Alice Johnson</div>
<div class="a cn" style="right:242px;top:846px;transform:scaleX(0.998)">42</div>
<div class="a cn" style="right:163px;top:846px;transform:scaleX(1.061)">1810.5</div>
<div class="a cn" style="right:73px;top:846px;transform:scaleX(0.998)">76041</div>
<div class="a ct" style="left:866px;top:846px;transform:scaleX(0.924)">GBP</div>
<div class="a cn" style="right:826px;top:870px;transform:scaleX(0.998)">24</div>
<div class="a cn" style="right:733px;top:870px;transform:scaleX(1.075)">15/04/2023</div>
<div class="a ct" style="left:206px;top:870px;transform:scaleX(1.012)">Oceania</div>
<div class="a ct" style="left:320px;top:870px;transform:scaleX(0.977)">External Hard Drive</div>
<div class="a ct" style="left:467px;top:870px;transform:scaleX(0.985)">Carlos MÃ©ndez</div>
<div class="a cn" style="right:242px;top:870px;transform:scaleX(0.998)">7</div>
<div class="a cn" style="right:163px;top:870px;transform:scaleX(1.051)">1069.18</div>
<div class="a cn" style="right:73px;top:870px;transform:scaleX(1.051)">7484.26</div>
<div class="a ct" style="left:866px;top:870px;transform:scaleX(0.900)">USD</div>
<div class="a cn" style="right:826px;top:894px;transform:scaleX(0.998)">25</div>
<div class="a cn" style="right:733px;top:894px;transform:scaleX(1.075)">18/03/2024</div>
<div class="a ct" style="left:206px;top:894px;transform:scaleX(1.017)">North America</div>
<div class="a ct" style="left:320px;top:894px;transform:scaleX(1.006)">Smartphone</div>
<div class="a ct" style="left:467px;top:894px;transform:scaleX(0.960)">Lars MÃ¼ller</div>
<div class="a cn" style="right:242px;top:894px;transform:scaleX(0.998)">9</div>
<div class="a cn" style="right:163px;top:894px;transform:scaleX(1.061)">200.45</div>
<div class="a cn" style="right:73px;top:894px;transform:scaleX(1.051)">1804.05</div>
<div class="a ct" style="left:866px;top:894px;transform:scaleX(0.938)">AUD</div>
<div class="a cn" style="right:826px;top:918px;transform:scaleX(0.998)">26</div>
<div class="a cn" style="right:733px;top:918px;transform:scaleX(1.075)">28/09/2024</div>
<div class="a ct" style="left:206px;top:918px;transform:scaleX(1.004)">South America</div>
<div class="a ct" style="left:320px;top:918px;transform:scaleX(0.977)">External Hard Drive</div>
<div class="a ct" style="left:467px;top:918px;transform:scaleX(0.960)">Lars MÃ¼ller</div>
<div class="a cn" style="right:242px;top:918px;transform:scaleX(0.998)">47</div>
<div class="a cn" style="right:163px;top:918px;transform:scaleX(1.051)">1064.56</div>
<div class="a cn" style="right:73px;top:918px;transform:scaleX(1.044)">50034.32</div>
<div class="a ct" style="left:866px;top:918px;transform:scaleX(0.894)">BRL</div>
<div class="a cn" style="right:826px;top:942px;transform:scaleX(0.998)">27</div>
<div class="a cn" style="right:733px;top:942px;transform:scaleX(1.085)">4/01/2024</div>
<div class="a ct" style="left:206px;top:942px;transform:scaleX(1.017)">North America</div>
<div class="a ct" style="left:320px;top:942px;transform:scaleX(1.007)">Monitor</div>
<div class="a ct" style="left:467px;top:942px;transform:scaleX(0.969)">ZoÃ« Williams</div>
<div class="a cn" style="right:242px;top:942px;transform:scaleX(0.998)">5</div>
<div class="a cn" style="right:163px;top:942px;transform:scaleX(1.061)">862.63</div>
<div class="a cn" style="right:73px;top:942px;transform:scaleX(1.051)">4313.15</div>
<div class="a ct" style="left:866px;top:942px;transform:scaleX(0.874)">EUR</div>
<div class="a" style="left:0;top:953px;width:137px;height:33px;background:#4a4e50;border-top-right-radius:7px"></div>
<div class="a" style="left:137px;top:953px;width:115px;height:33px;background:#fff"></div>
<div class="a" style="left:252px;top:953px;width:681px;height:33px;background:#4a4e50;border-top-left-radius:7px"></div>
<svg class="a" style="left:27px;top:964px" width="9" height="16" viewBox="0 0 9 16" fill="none" stroke="#8c8f90" stroke-width="1.3"><path d="M8 1 L1.2 8 L8 15"/></svg>
<svg class="a" style="left:68px;top:964px" width="9" height="16" viewBox="0 0 9 16" fill="none" stroke="#8c8f90" stroke-width="1.3"><path d="M1 1 L7.8 8 L1 15"/></svg>
<div class="t" style="left:147px;top:962px;font-size:16.5px;color:#262626;-webkit-text-stroke:0.45px #262626;transform:scaleX(1.04);transform-origin:0 0">sales_report</div>
<div class="a" style="left:147px;top:983px;width:95px;height:2px;background:#1f7a4a"></div>
<div class="a" style="left:257px;top:961px;width:1px;height:23px;background:#7a7d7e"></div>
<svg class="a" style="left:310px;top:964px" width="15" height="15" viewBox="0 0 15 15" stroke="#dedede" stroke-width="1.4"><path d="M7.5 0 V15 M0 7.5 H15"/></svg>
<div class="a" style="left:907px;top:967px;width:3px;height:3px;background:#e0e0e0"></div>
<div class="a" style="left:907px;top:972px;width:3px;height:3px;background:#e0e0e0"></div>
<div class="a" style="left:907px;top:977px;width:3px;height:3px;background:#e0e0e0"></div>
<div class="a" style="left:928px;top:962px;width:20px;height:20px;border-radius:50%;background:#3c3f40"></div>

</body></html>
